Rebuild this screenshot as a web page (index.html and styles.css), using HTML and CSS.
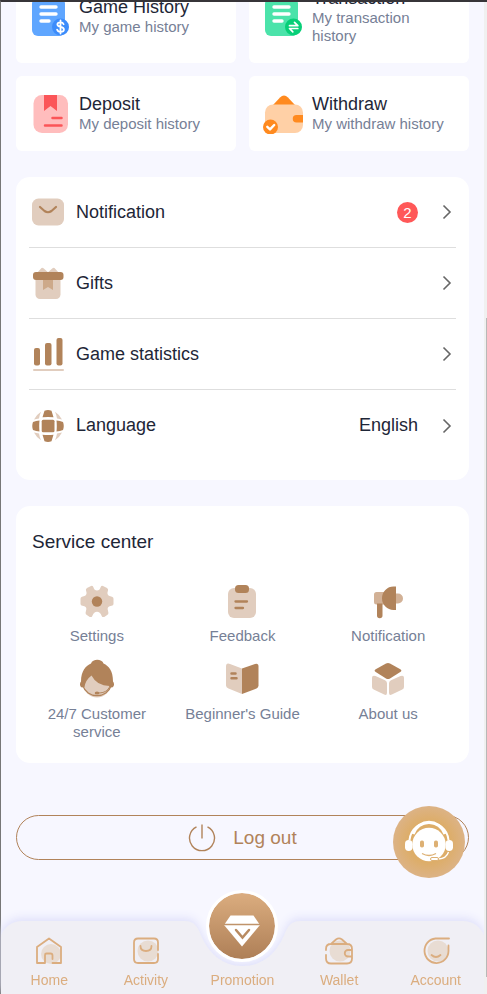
FILE: index.html
```html
<!DOCTYPE html>
<html lang="en">
<head>
<meta charset="utf-8">
<meta name="viewport" content="width=device-width, initial-scale=1">
<title>Account</title>
<link rel="stylesheet" href="styles.css">
</head>
<body>
<main class="page">
  <section class="history">
    <a class="card" href="#">
      <svg class="card-icon" viewBox="0 0 40 40"><rect x="2" y="1" width="33" height="38" rx="6" fill="#5fa6ff"/><path d="M11 10h15M11 17h15M11 24h8" stroke="#fff" stroke-width="3.4" stroke-linecap="round"/><circle cx="30.500" cy="30" r="8.500" fill="#3c8cfb"/><path d="M33.600 27.200c-.5-1.400-1.700-1.900-3.100-1.900-1.800 0-3.100.8-3.100 2.300 0 3.300 6.500 1.400 6.500 4.800 0 1.500-1.500 2.400-3.400 2.400-1.700 0-3-.8-3.400-2.200M30.500 23.500v13" fill="none" stroke="#fff" stroke-width="1.800" stroke-linecap="round"/></svg>
      <span class="card-text"><span class="card-title">Game History</span><span class="card-sub">My game history</span></span>
    </a>
    <a class="card" href="#">
      <svg class="card-icon" viewBox="0 0 40 40"><rect x="2" y="1" width="33" height="38" rx="6" fill="#4be3aa"/><path d="M11 10h15M11 17h15M11 24h8" stroke="#fff" stroke-width="3.4" stroke-linecap="round"/><circle cx="30.500" cy="30" r="8.500" fill="#07cf78"/><path d="M26.500 28.700h8.300l-3.300-3.300M34.800 31.500h-8.300l3.300 3.300" fill="none" stroke="#fff" stroke-width="1.700" stroke-linecap="round" stroke-linejoin="round"/></svg>
      <span class="card-text"><span class="card-title">Transaction</span><span class="card-sub">My transaction history</span></span>
    </a>
    <a class="card" href="#">
      <svg class="card-icon" viewBox="0 0 40 40"><rect x="3.500" y="1" width="34.500" height="38" rx="8.500" fill="#ffbdbd"/><path d="M14 1h13v16l-6.500-5L14 17z" fill="#fb5558"/><path d="M22.500 24h9M15 31.500h16.500" stroke="#fb5558" stroke-width="2.500" stroke-linecap="round"/></svg>
      <span class="card-text"><span class="card-title">Deposit</span><span class="card-sub">My deposit history</span></span>
    </a>
    <a class="card" href="#">
      <svg class="card-icon" viewBox="0 0 40 40"><path d="M10 11l7-7.500q4-4 8 0l7 7.500z" fill="#ff8a1f"/><rect x="2" y="10.500" width="38" height="28.500" rx="8" fill="#ffd0a6"/><path d="M40 21h-6.500a3.500 3.500 0 0 0 0 7.500H40z" fill="#ff8a1f"/><circle cx="7.500" cy="33" r="7.500" fill="#ff8a1f"/><path d="M4.300 32.800l2.700 2.600 4.200-4.400" fill="none" stroke="#fff" stroke-width="2.400" stroke-linecap="round" stroke-linejoin="round"/></svg>
      <span class="card-text"><span class="card-title">Withdraw</span><span class="card-sub">My withdraw history</span></span>
    </a>
  </section>

  <nav class="menu" aria-label="Account menu">
    <a class="row" href="#">
      <svg class="row-icon" viewBox="0 0 32 32"><rect y="2.500" width="32" height="27" rx="6.500" fill="#e1cdbe"/><path d="M8 11l4.500 4q3.500 2.500 7 0L24 11" fill="none" stroke="#b1835a" stroke-width="2.200" stroke-linecap="round"/></svg>
      <span class="row-label">Notification</span><span class="badge">2</span>
      <svg class="chevron" viewBox="0 0 10 16"><path d="M1.500 1.500L8 8l-6.500 6.500"/></svg>
    </a>
    <a class="row" href="#">
      <svg class="row-icon" viewBox="0 0 32 32"><path d="M5 6l4.500-5q1-.8 2 .3l4.500 4 4.500-4q1-1 2-.3L27 6z" fill="#e1cdbe"/><rect x="3.500" y="9" width="25" height="23" rx="4.500" fill="#e1cdbe"/><path d="M11 13h10v10l-5-3-5 3z" fill="#cda98a"/><rect x="1" y="5" width="30.500" height="8" rx="3" fill="#b1835a"/></svg>
      <span class="row-label">Gifts</span>
      <svg class="chevron" viewBox="0 0 10 16"><path d="M1.500 1.500L8 8l-6.500 6.500"/></svg>
    </a>
    <a class="row" href="#">
      <svg class="row-icon" viewBox="0 0 32 34"><g fill="#b1835a"><rect x="2" y="11" width="6" height="17.500" rx="2"/><rect x="13" y="6" width="6.500" height="22.500" rx="2"/><rect x="24.500" y="1" width="6" height="27.500" rx="2"/></g><path d="M2 33h29" stroke="#e1cdbe" stroke-width="2" stroke-linecap="round"/></svg>
      <span class="row-label">Game statistics</span>
      <svg class="chevron" viewBox="0 0 10 16"><path d="M1.500 1.500L8 8l-6.500 6.500"/></svg>
    </a>
    <a class="row" href="#">
      <svg class="row-icon" viewBox="0 0 32 32"><path d="M9 1.700Q7.500 5 7 8.500 4.500 8.800 2 9.500 4.500 4.500 9 1.700zM23 1.700q1.500 3.300 2 6.800 2.500.3 5 1-2.500-5-7-7.800zM9 30.300Q7.500 27 7 23.500q-2.500-.3-5-1 2.500 5 7 7.800zM23 30.300q1.500-3.300 2-6.800 2.500-.3 5-1-2.500 5-7 7.800z" fill="#e1cdbe"/><g fill="#b1835a"><rect x="9.700" y="9.700" width="12.800" height="12.600" rx="1.500"/><path d="M12.500.8q3.500-1.400 7 0l2 6.500q-5.500-.6-11 0zM12.500 31.200q3.500 1.400 7 0l2-6.500q-5.500.6-11 0zM1 12q3-1.200 6.500-1.500-.6 5.500 0 11Q4 21.200 1 20q-1.500-4 0-8zM31 12q-3-1.200-6.500-1.500.6 5.500 0 11Q28 21.200 31 20q1.500-4 0-8z"/></g></svg>
      <span class="row-label">Language</span><span class="row-value">English</span>
      <svg class="chevron" viewBox="0 0 10 16"><path d="M1.500 1.500L8 8l-6.500 6.500"/></svg>
    </a>
  </nav>

  <section class="service">
    <h2 class="service-title">Service center</h2>
    <div class="service-grid">
      <a class="tile" href="#"><svg class="tile-icon" viewBox="0 0 40 40"><path d="M10 7l4-2q1.500-.7 2.300 1 1 3.500 3.700 3.500T23.700 6q.8-1.700 2.300-1l4 2q1.600 1 1 2.600-1.700 4.400 1.500 5.500l2.500.6q1.500.5 1.500 2v5.200q0 1.600-2 1.900-4.400.6-3.800 3.800l.7 3q.3 1.600-1.200 2.500l-3 1.800q-1.700.7-2.500-1-1.700-4.200-4.700-4.200t-4.700 4.200q-.8 1.700-2.500 1l-3-1.800q-1.500-.9-1.200-2.500l.7-3q.6-3.200-3.800-3.800-2-.3-2-1.900v-5.200q0-1.500 1.500-2l2.500-.6q3.200-1.100 1.500-5.500Q8.400 8 10 7z" fill="#e1cdbe"/><circle cx="20" cy="20.500" r="5.200" fill="#b1835a"/></svg><span>Settings</span></a>
      <a class="tile" href="#"><svg class="tile-icon" viewBox="0 0 40 40"><rect x="6" y="7" width="28" height="30" rx="6" fill="#e1cdbe"/><rect x="13" y="4" width="14" height="8" rx="3.500" fill="#b1835a"/><path d="M13.500 20.500H25M13.500 27H21" stroke="#b1835a" stroke-width="2.300" stroke-linecap="round"/></svg><span>Feedback</span></a>
      <a class="tile" href="#"><svg class="tile-icon" viewBox="0 0 40 40"><rect x="6" y="11" width="15" height="12.500" rx="2.500" fill="#d2b196"/><path d="M28 12.500h2a4.500 4.500 0 0 1 0 10h-2z" fill="#d2b196"/><path d="M28 5.500V29h-2.500a11.500 11.750 0 0 1 0-23.500zM9 22.500h5.500v12a2.700 2.700 0 0 1-5.500 0z" fill="#b1835a"/></svg><span>Notification</span></a>
      <a class="tile" href="#"><svg class="tile-icon" viewBox="0 0 40 40"><circle cx="20" cy="25" r="13.500" fill="#e1cdbe"/><path d="M5 28.500C2.500 27.500 2.500 24 4 22.500 4 12 9 6.500 14 4.500 15.500-.5 25-.5 26.500 4.500 32 7 36 12 36 22.500c1.500 1.500 1.500 5-1 6l-2.500-.5v-1Q20 27 14.500 16.500 8.500 21 7.500 28z" fill="#b1835a"/><path d="M6 27a14.500 13 0 0 0 28 0" fill="none" stroke="#b1835a" stroke-width="1.200"/><path d="M21 34c6 0 10-2 12-7" fill="none" stroke="#b1835a" stroke-width="1"/><ellipse cx="20" cy="34" rx="2.300" ry="1.500" fill="#b1835a"/></svg><span>24/7 Customer service</span></a>
      <a class="tile" href="#"><svg class="tile-icon" viewBox="0 0 40 40"><path d="M20 9.500L8 5q-4-1.500-4 2.500v19q0 2.200 2.500 3L20 35z" fill="#e1cdbe"/><path d="M20 9.500L33 5q3.500-1 3.500 2.500v19q0 2.200-2 3L20 35z" fill="#b1835a"/><path d="M9.500 14.500h4M9.500 19.300h5" stroke="#b1835a" stroke-width="2.500" stroke-linecap="round"/></svg><span>Beginner's Guide</span></a>
      <a class="tile" href="#"><svg class="tile-icon" viewBox="0 0 40 40"><path d="M18 4.600q2-1.100 4 0l10.300 5.700q2.200 1.400 0 2.800L22 19.400q-2 1.100-4 0L7.700 13.100q-2.200-1.400 0-2.800z" fill="#b1835a"/><path d="M7.500 17l9.500 4.300q2 1 2 3v9.400q0 3-2.800 1.900l-10-4.800Q4 30 4 28v-9.200q0-2.900 3.500-1.800zM32.500 17L23 21.300q-2 1-2 3v9.400q0 3 2.800 1.900l10-4.800q2.200-.8 2.200-2.800v-9.200q0-2.900-3.500-1.800z" fill="#e1cdbe"/></svg><span>About us</span></a>
    </div>
  </section>

  <button class="logout" type="button">
    <svg class="power" viewBox="0 0 28 28"><path d="M8.500 2.900a12.500 12.500 0 1 0 11 0M14 .5v14" fill="none" stroke="#b1835a" stroke-width="1.400"/></svg>
    <span>Log out</span>
  </button>
</main>

<button class="support" type="button" aria-label="Customer support">
  <svg viewBox="0 0 72 72"><g fill="none" stroke="#fff"><path d="M16.500 34C19 11 53 11 55.500 34" stroke-width="2"/><path d="M20 28C26 12.500 46 12.500 52 28" stroke-width="3.200"/></g><rect x="12" y="34" width="7.500" height="11" rx="3.700" fill="#fff"/><rect x="52.500" y="34" width="7.500" height="11" rx="3.700" fill="#fff"/><circle cx="36" cy="38.500" r="16.700" fill="#fff"/><rect x="27" y="34.500" width="4" height="7" rx="1.800" fill="#ddb073"/><rect x="41" y="34.500" width="4" height="7" rx="1.800" fill="#ddb073"/><path d="M29 47.500q7 4 14 0" fill="none" stroke="#ddb073" stroke-width="1.300"/><path d="M55.500 46q-2 6.500-10 7" fill="none" stroke="#fff" stroke-width="1.300"/><rect x="37.500" y="51.500" width="8" height="3" rx="1.500" fill="#fff" stroke="#ddb073" stroke-width="1"/></svg>
</button>

<nav class="tabbar" aria-label="Main">
  <svg class="tabbar-bg" viewBox="0 0 483 73" preserveAspectRatio="none"><path d="M0 73V14Q7 0 21 0H184C193 0 196 5 199 12 207 32 221 45 241.500 45S276 32 284 12C287 5 290 0 299 0H462Q476 0 483 14V73z" fill="#f0eff5"/></svg>
  <a class="tab" href="#"><svg class="tab-icon" viewBox="0 0 28 28"><circle cx="16" cy="17" r="10" fill="#e8dcd3"/><path d="M10 26H2V10L14 1.500 26 10v16h-8.500M10 26v-8q0-1.500 1.500-1.500h4q2 0 2 2V22" /></svg><span>Home</span></a>
  <a class="tab" href="#"><svg class="tab-icon" viewBox="0 0 28 28"><circle cx="16" cy="14" r="10.500" fill="#e8dcd3"/><path d="M26 13V5.500Q26 1.500 22 1.500H6q-4 0-4 4V22q0 4 4 4h16q4 0 4-4v-5M8.500 9q0 5 5.500 5t5.500-5"/></svg><span>Activity</span></a>
  <a class="tab" href="#"><span class="promo-disc"><svg viewBox="0 0 66 66"><path d="M21.500 22.500h23l6.500 9.500-18 21.500L15 32z" fill="#fff"/><path d="M15 31.500h36" stroke="#c0936a" stroke-width="1.500"/><path d="M27 37l6.500 7.500L40 37" fill="none" stroke="#b98b61" stroke-width="2.500" stroke-linecap="round"/></svg></span><span>Promotion</span></a>
  <a class="tab" href="#"><svg class="tab-icon" viewBox="0 0 28 28"><circle cx="15" cy="14" r="10.500" fill="#e8dcd3"/><path d="M1 13v-1Q1 7 6 7h16q5 0 5 5v9.500q0 5-5 5H6q-5 0-5-5V18M6 7l5-4.500q3-2.200 6 0L22 7M27 13h-4a3 3 0 0 0 0 6.500h4"/></svg><span>Wallet</span></a>
  <a class="tab" href="#"><svg class="tab-icon" viewBox="0 0 28 28"><circle cx="16" cy="14" r="10.500" fill="#e8dcd3"/><path d="M27 1.500H13.500A12 12.300 0 1 0 26.500 14V8.500M9.500 18q4.500 4 9 0"/></svg><span>Account</span></a>
</nav>
<div class="scrollbar" aria-hidden="true"><div class="thumb"></div></div>
</body>
</html>
```

FILE: styles.css
```css
* { box-sizing: border-box; }

body {
  margin: 0;
  background: #f7f7ff;
  color: #1e2637;
  font-family: "Liberation Sans", Arial, sans-serif;
}

a { color: inherit; text-decoration: none; }
svg { display: block; flex: none; }
button { font: inherit; cursor: pointer; }

.page {
  min-height: 100vh;
  overflow: hidden;
  padding: 0 18px 120px 15px;
  border-top: 2px solid #373539;
  border-left: 1px solid #777;
}

.history {
  display: grid;
  grid-template-columns: 1fr 1fr;
  gap: 13px;
  margin-top: -32px;
}

.card {
  display: flex;
  align-items: center;
  gap: 9px;
  padding: 19px 14px 18px;
  background: #fff;
  border-radius: 6px;
}
.card-icon { width: 40px; height: 40px; margin: -1px 0; }
.card-text { min-width: 0; }
.card-title, .card-sub { display: block; }
.card-title { margin-bottom: 2px; font-size: 18px; line-height: 18px; }
.card-sub { font-size: 15px; line-height: 18px; color: #768096; }

.menu {
  margin-top: 26px;
  padding: 0 13px 19px;
  background: #fff;
  border-radius: 14px;
}
.row {
  display: flex;
  align-items: center;
  height: 71px;
  padding: 0 4px 0 3px;
  border-bottom: 1px solid #dedede;
  font-size: 18px;
}
.row:last-child { border-bottom: 0; }
.row-icon { width: 32px; height: 34px; margin-right: 12px; }
.row-label { flex: 1; }
.badge {
  width: 21px;
  height: 21px;
  border-radius: 50%;
  background: #ff5858;
  color: #fff;
  font-size: 15px;
  line-height: 21px;
  text-align: center;
}
.chevron {
  width: 10px;
  height: 16px;
  margin-left: 24px;
  fill: none;
  stroke: #666;
  stroke-width: 1.6;
}

.service {
  margin-top: 26px;
  padding: 25px 8px 22px;
  background: #fff;
  border-radius: 14px;
}
.service-title {
  margin: 0 8px 28px;
  font-size: 19px;
  font-weight: 400;
  line-height: 22px;
}
.service-grid {
  display: grid;
  grid-template-columns: repeat(3, 1fr);
  row-gap: 14px;
}
.tile {
  display: flex;
  flex-direction: column;
  align-items: center;
  gap: 6px;
  padding: 0 12px;
  font-size: 15px;
  line-height: 18px;
  color: #768096;
  text-align: center;
}
.tile-icon { width: 40px; height: 40px; }

.logout {
  display: flex;
  align-items: center;
  justify-content: center;
  gap: 17px;
  width: 100%;
  height: 45px;
  margin-top: 52px;
  border: 1px solid #b1835a;
  border-radius: 23px;
  background: none;
  color: #b1835a;
  font-size: 19px;
}
.power { width: 28px; height: 28px; }

.support {
  position: fixed;
  right: 22px;
  bottom: 116px;
  z-index: 2;
  width: 72px;
  height: 72px;
  padding: 0;
  border: 0;
  border-radius: 50%;
  background: radial-gradient(circle, #ddad68 40%, #dcb387 72%);
}

.tabbar {
  position: fixed;
  left: 1px;
  right: 3px;
  bottom: 0;
  display: grid;
  grid-template: 73px / repeat(5, 1fr);
}
.tabbar-bg {
  position: absolute;
  width: 100%;
  height: 100%;
  overflow: visible;
  filter: drop-shadow(0 -3px 4px #dfe0fa);
}
.tab {
  position: relative;
  display: flex;
  flex-direction: column;
  align-items: center;
  justify-content: flex-end;
  gap: 7px;
  padding-bottom: 6px;
  color: #dbad7f;
  font-size: 14px;
  line-height: 16px;
}
.tab-icon { width: 28px; height: 28px; }
.tab-icon path {
  fill: none;
  stroke: #dbad7f;
  stroke-width: 1.8;
  stroke-linecap: round;
  stroke-linejoin: round;
}
.promo-disc {
  margin-bottom: 3px;
  border: 3px solid #fff;
  border-radius: 50%;
  background: linear-gradient(#dbad7f, #ae7f57) padding-box;
}
.promo-disc svg { width: 66px; height: 66px; }

.scrollbar {
  position: fixed;
  top: 2px;
  right: 0;
  bottom: 0;
  width: 3px;
  background: #f0f0f0;
}
.thumb {
  width: 1px;
  height: 66.4%;
  margin: 316px 0 0 2px;
  background: #b8b8b8;
}
```
